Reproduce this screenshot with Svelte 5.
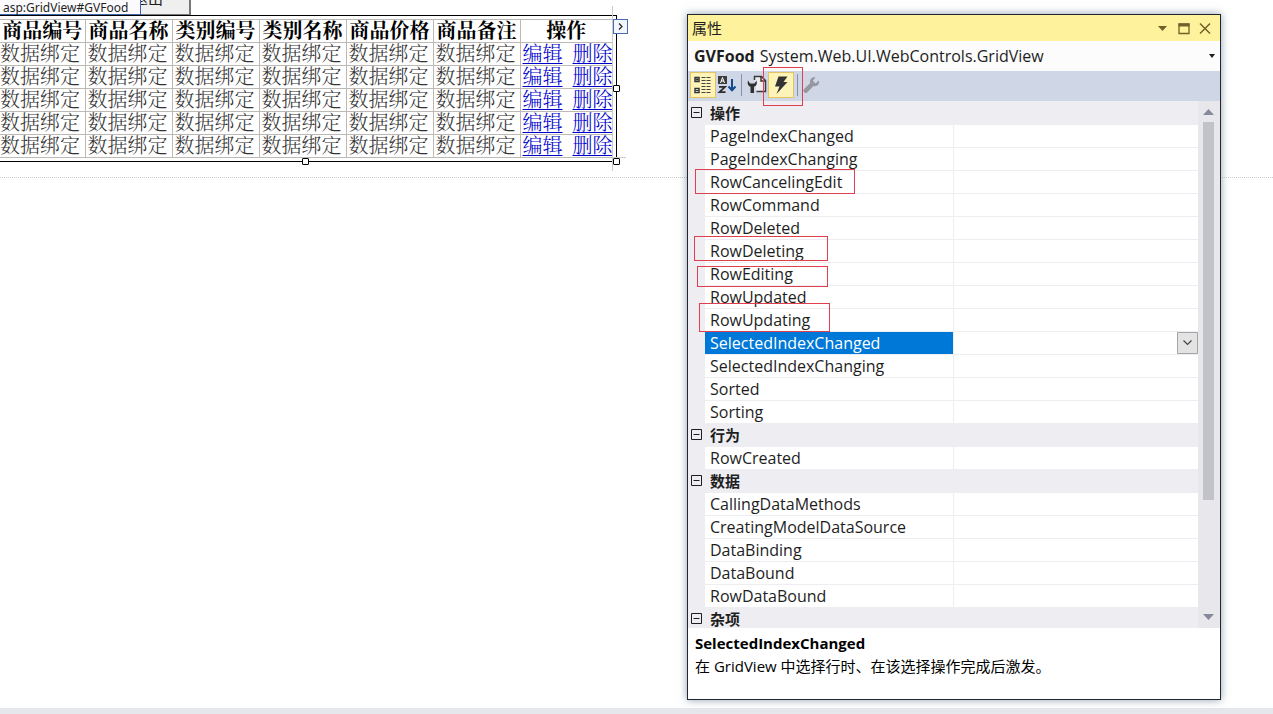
<script>
  const columns = ['商品编号', '商品名称', '类别编号', '类别名称', '商品价格', '商品备注'];
  const rows = [1, 2, 3, 4, 5];

  const groups = [
    {
      name: '操作',
      events: [
        'PageIndexChanged',
        'PageIndexChanging',
        'RowCancelingEdit',
        'RowCommand',
        'RowDeleted',
        'RowDeleting',
        'RowEditing',
        'RowUpdated',
        'RowUpdating',
        'SelectedIndexChanged',
        'SelectedIndexChanging',
        'Sorted',
        'Sorting'
      ]
    },
    { name: '行为', events: ['RowCreated'] },
    {
      name: '数据',
      events: ['CallingDataMethods', 'CreatingModelDataSource', 'DataBinding', 'DataBound', 'RowDataBound']
    },
    { name: '杂项', events: [] }
  ];

  let selected = $state('SelectedIndexChanged');
  let closed = $state({});
</script>

<div class="page">
  <main class="designer">
    <div class="top-line">
      <span class="tag">asp:GridView#GVFood</span>
      <button class="exit"><span>退出</span></button>
    </div>

    <div class="selection">
      <table class="food">
        <thead>
          <tr>
            {#each columns as column}
              <th>{column}</th>
            {/each}
            <th class="ops">操作</th>
          </tr>
        </thead>
        <tbody>
          {#each rows as row}
            <tr>
              {#each columns as column}
                <td>数据绑定</td>
              {/each}
              <td class="ops"><a href="#edit">编辑</a><a href="#delete">删除</a></td>
            </tr>
          {/each}
        </tbody>
      </table>
      <i class="guide down"></i>
      <i class="guide across"></i>
      <i class="handle bottom"></i>
      <i class="handle right"></i>
      <i class="handle corner"></i>
      <button class="smart" aria-label="GridView 任务">
        <svg width="13" height="13" viewBox="0 0 13 13"><path d="M5 3.5 8 6.5 5 9.5" fill="none" stroke="#222" stroke-width="1.2" /></svg>
      </button>
    </div>
    <div class="form-edge"></div>
  </main>
  <footer></footer>

  <section class="panel">
    <header>
      <h2>属性</h2>
      <button aria-label="窗口位置">
        <svg width="13" height="13" viewBox="0 0 13 13"><path d="M2 4h9L6.500 9z" fill="#6f6128" /></svg>
      </button>
      <button aria-label="最大化">
        <svg width="13" height="13" viewBox="0 0 13 13"><path d="M2 2h10v9.500H2z" fill="none" stroke="#6f6128" stroke-width="1.300" /><path d="M1.500 1.500h11v3h-11z" fill="#6f6128" /></svg>
      </button>
      <button aria-label="关闭">
        <svg width="13" height="13" viewBox="0 0 13 13"><path d="M2 1.500l10 10M12 1.500l-10 10" stroke="#6f6128" stroke-width="1.500" /></svg>
      </button>
    </header>

    <div class="object">
      <label for="object">GVFood</label>
      <select id="object">
        <option>System.Web.UI.WebControls.GridView</option>
      </select>
      <svg width="8" height="4" viewBox="0 0 8 4"><path d="M1 0h6L4 4z" fill="#1e1e1e" /></svg>
    </div>

    <div class="toolbar">
      <button class="on" aria-label="按分类顺序">
        <svg width="20" height="20" viewBox="0 0 20 20">
          <path d="M2 2.500h4v4H2zM2 13.500h4v4H2z" fill="#fff" stroke="#333" stroke-width="1.500" />
          <path d="M4 3v3M2.500 4.500h3M2.500 15.500h3" stroke="#333" />
          <path d="M8.500 2.500h10M8.500 5.500h10M8.500 8.500h10M8.500 11.500h10M8.500 14.500h10M8.500 17.500h10" stroke="#444" stroke-dasharray="4 1" />
        </svg>
      </button>
      <button aria-label="字母顺序">
        <svg width="20" height="20" viewBox="0 0 20 20">
          <path d="M1 1h9v8H1z" fill="#3c3c3c" />
          <path d="M3.500 8 5.500 2.500 7.500 8M4 6h3" fill="none" stroke="#fff" />
          <path d="M2 11.800h6L2.500 17.200h6" fill="none" stroke="#2d2d2d" stroke-width="1.800" />
          <path d="M15 4v11M11.500 11.500 15 15.200 18.500 11.500" fill="none" stroke="#0d4a91" stroke-width="2" />
        </svg>
      </button>
      <i></i>
      <button aria-label="属性">
        <svg width="20" height="20" viewBox="0 0 20 20">
          <path d="M7.500 5V1.500h7l4 4v11h-9" fill="#ececf1" stroke="#3a3a3a" stroke-width="1.500" />
          <path d="M14 1.500v4.500h4.500" fill="none" stroke="#3a3a3a" stroke-width="1.500" />
          <path d="M1 5.500C0 9 1.500 11 3.500 11.800V18h3.500v-6.200C9.500 11 10.500 8.500 9.500 5.500L7.500 8.500H3z" fill="#303030" />
        </svg>
      </button>
      <button class="on" aria-label="事件">
        <svg width="20" height="20" viewBox="0 0 20 20"><path d="M7.500 1.500h9l-4 5.500h4L5.500 19 8.500 11.500H4z" fill="#333" /></svg>
      </button>
      <i></i>
      <button aria-label="属性页">
        <svg width="20" height="20" viewBox="0 0 20 20"><path d="M12.500 2.500C9 1.500 6 5 7.200 8L1 14.200a2.200 2.200 0 0 0 3.300 3L10.500 11C14 12.200 17 9 15.800 5.500L12.500 8.500 9.800 5.800z" fill="#96979f" /></svg>
      </button>
    </div>

    <div class="events">
      <div class="list">
        {#each groups as group}
          <button class="group" onclick={() => (closed[group.name] = !closed[group.name])}>
            <svg width="11" height="11" viewBox="0 0 11 11">
              <path d="M.5.5h10v10H.5zM2.500 5.500h6" fill="none" stroke="#1e1e1e" />
              {#if closed[group.name]}<path d="M5.500 2.500v6" stroke="#1e1e1e" />{/if}
            </svg>
            <span>{group.name}</span>
          </button>
          {#if !closed[group.name]}
            {#each group.events as event}
              <div class="event" class:selected={selected === event}>
                <label for={event}>{event}</label>
                {#if selected === event}
                  <div class="value">
                    <select id={event}><option></option></select>
                    <svg width="21" height="22" viewBox="0 0 21 22">
                      <path d="M.5.5h20v21H.5z" fill="#e3e3e3" stroke="#a5a5a5" />
                      <path d="M6.500 8.500l4 4 4-4" fill="none" stroke="#444" stroke-width="1.200" />
                    </svg>
                  </div>
                {:else}
                  <input id={event} type="text" onfocus={() => (selected = event)} />
                {/if}
              </div>
            {/each}
          {/if}
        {/each}
      </div>
      <div class="scroll">
        <svg width="11" height="6" viewBox="0 0 11 6"><path d="M0 6h11L5.500 0z" fill="#868999" /></svg>
        <div class="track"><div class="thumb"></div></div>
        <svg width="11" height="6" viewBox="0 0 11 6"><path d="M0 0h11L5.500 6z" fill="#868999" /></svg>
      </div>
    </div>

    <div class="help">
      <strong>SelectedIndexChanged</strong>
      <p>在 GridView 中选择行时、在该选择操作完成后激发。</p>
    </div>

    <!-- red marks drawn over the panel -->
    <i class="mark toolbar-mark"></i>
    <i class="mark canceling"></i>
    <i class="mark deleting"></i>
    <i class="mark editing"></i>
    <i class="mark updating"></i>
  </section>
</div>

<style>
  :global(body) {
    background: #fff;
  }
  .page {
    position: relative;
    display: flex;
    flex-direction: column;
    min-height: 100vh;
    overflow: hidden;
    font-family: "Open Sans", "Noto Sans CJK SC", sans-serif;
    font-size: 15px;
    color: #1e1e1e;
  }
  button, input, select {
    font: inherit;
    color: inherit;
    margin: 0;
    padding: 0;
    border: 0;
    border-radius: 0;
    background: none;
    outline: none;
  }
  svg {
    display: block;
    flex: none;
  }
  .designer {
    flex: 1;
  }
  footer {
    height: 6px;
    background: #e6e7ec;
  }

  /* designer */
  .top-line {
    display: flex;
    height: 15px;
  }
  .tag {
    box-sizing: border-box;
    width: 141px;
    padding-left: 3px;
    border-right: 1px solid #3d64b1;
    border-bottom: 1px solid #3d64b1;
    background: #fbfbfd;
    font-family: "Noto Sans", sans-serif;
    font-size: 12px;
    line-height: 15px;
    white-space: nowrap;
  }
  .exit {
    display: flex;
    align-items: flex-end;
    width: 50px;
    overflow: hidden;
    border-right: 2px solid #777;
    border-bottom: 1px solid #777;
    background: #efefef;
  }
  .exit span {
    margin: 0 0 6px -8px;
    font-family: "Noto Sans CJK SC", sans-serif;
    font-size: 15px;
    line-height: 20px;
    white-space: nowrap;
  }
  .selection {
    position: relative;
    box-sizing: border-box;
    width: 617px;
    padding: 3px 3px 3px 0;
    border: 1px solid #000;
    border-left: 0;
  }
  .food {
    width: 613px;
    table-layout: fixed;
    border-collapse: collapse;
    font-family: "Liberation Serif", "Noto Serif CJK SC", serif;
    font-size: 20px;
    line-height: 22px;
    color: #000;
  }
  .food th, .food td {
    box-sizing: border-box;
    height: 23px;
    padding: 0;
    border: 1px solid #bdb9b4;
    border-left: 0;
    text-align: left;
    white-space: nowrap;
  }
  .food th {
    width: 87px;
    text-align: center;
  }
  .food th:first-child {
    width: 85px;
  }
  .food td {
    padding-left: 2px;
    font-weight: 300;
    color: #333;
  }
  .food td:first-child {
    padding-left: 0;
  }
  .food th.ops {
    width: auto;
  }
  .food a {
    margin-right: 10px;
    color: #00c;
    text-underline-offset: 2px;
    text-decoration-thickness: 1px;
  }
  .food a:last-child {
    margin-right: 0;
  }
  .handle {
    position: absolute;
    box-sizing: border-box;
    width: 7px;
    height: 7px;
    border: 1px solid #000;
    border-radius: 1px;
    background: #fff;
  }
  .bottom {
    left: 302px;
    bottom: -4px;
  }
  .right {
    top: 69px;
    right: -4px;
  }
  .corner {
    right: -4px;
    bottom: -4px;
  }
  .guide {
    position: absolute;
  }
  .down {
    top: -10px;
    bottom: -10px;
    right: 3px;
    border-right: 1px solid #ccc;
  }
  .across {
    left: 612px;
    bottom: 3px;
    width: 14px;
    border-bottom: 1px solid #ccc;
  }
  .smart {
    position: absolute;
    top: 3px;
    right: -12px;
    border: 1px solid #4a6cb5;
    background: #f3f6fc;
  }
  .form-edge {
    margin-top: 15px;
    border-top: 1px dotted #ccc;
  }

  /* properties window */
  .panel {
    position: absolute;
    top: 14px;
    bottom: 14px;
    left: 687px;
    right: 52px;
    display: flex;
    flex-direction: column;
    box-sizing: border-box;
    border: 1px solid #1c2733;
    background: #fff;
    box-shadow: 0 0 8px rgba(40, 70, 90, 0.5);
  }
  header {
    display: flex;
    align-items: center;
    gap: 8px;
    height: 26px;
    padding: 0 9px 0 4px;
    background: #fff29d;
  }
  h2 {
    flex: 1;
    margin: 0;
    font-size: 15px;
    font-weight: 400;
    line-height: 24px;
  }
  .object {
    position: relative;
    display: flex;
    align-items: center;
    height: 30px;
    padding: 0 4px 0 6px;
    background: #fcfcfc;
    font-size: 16px;
  }
  .object label {
    font-weight: 700;
    margin-right: 5px;
  }
  .object select {
    flex: 1;
    appearance: none;
  }
  .object svg {
    position: absolute;
    right: 4px;
    pointer-events: none;
  }
  .toolbar {
    display: flex;
    align-items: center;
    box-sizing: border-box;
    height: 30px;
    padding: 0 0 2px 2px;
    background: #cfd6e5;
  }
  .toolbar button {
    padding: 1px;
  }
  .toolbar .on {
    padding: 2px;
    border: 1px solid #e5c365;
    background: #fff4b8;
  }
  .toolbar i {
    width: 1px;
    height: 22px;
    margin: 0 4px 0 3px;
    background: #8591a8;
  }
  .events {
    flex: 1;
    display: flex;
    min-height: 0;
    overflow: hidden;
  }
  .list {
    flex: 1;
    background: #ededf2;
  }
  .group {
    display: flex;
    align-items: center;
    gap: 8px;
    width: 100%;
    height: 23px;
    padding-left: 3px;
    font-weight: 700;
    line-height: 22px;
  }
  .event {
    display: flex;
    box-sizing: border-box;
    height: 23px;
    margin-left: 17px;
    border-top: 1px solid #ededf2;
    background: #fff;
    font-size: 16px;
  }
  .event label {
    box-sizing: border-box;
    width: 249px;
    padding-left: 5px;
    border-right: 1px solid #ededf2;
    line-height: 22px;
  }
  .selected label {
    background: #0078d7;
    background-clip: padding-box;
    color: #fff;
  }
  .event input {
    flex: 1;
    min-width: 0;
  }
  .value {
    display: flex;
    position: relative;
    flex: 1;
  }
  .value select {
    flex: 1;
    appearance: none;
  }
  .value svg {
    position: absolute;
    right: 0;
    pointer-events: none;
  }
  .scroll {
    display: flex;
    flex-direction: column;
    align-items: center;
    box-sizing: border-box;
    width: 22px;
    padding: 8px 1px 8px 0;
    background: #e8e8ec;
  }
  .track {
    flex: 1;
    display: flex;
    margin: 7px 0;
  }
  .thumb {
    width: 11px;
    height: 78%;
    background: #c2c3c9;
  }
  .help {
    box-sizing: border-box;
    height: 71px;
    padding: 4px 7px;
    line-height: 23px;
    color: #000;
  }
  .help p {
    margin: 0;
  }
  .mark {
    position: absolute;
    box-sizing: border-box;
    border: 1px solid #e0404d;
    pointer-events: none;
  }
  .toolbar-mark {
    top: 52px;
    left: 75px;
    width: 40px;
    height: 39px;
  }
  .canceling {
    top: 154px;
    left: 7px;
    width: 160px;
    height: 25px;
  }
  .deleting {
    top: 221px;
    left: 6px;
    width: 134px;
    height: 25px;
  }
  .editing {
    top: 251px;
    left: 9px;
    width: 131px;
    height: 21px;
  }
  .updating {
    top: 288px;
    left: 11px;
    width: 131px;
    height: 29px;
  }
</style>
